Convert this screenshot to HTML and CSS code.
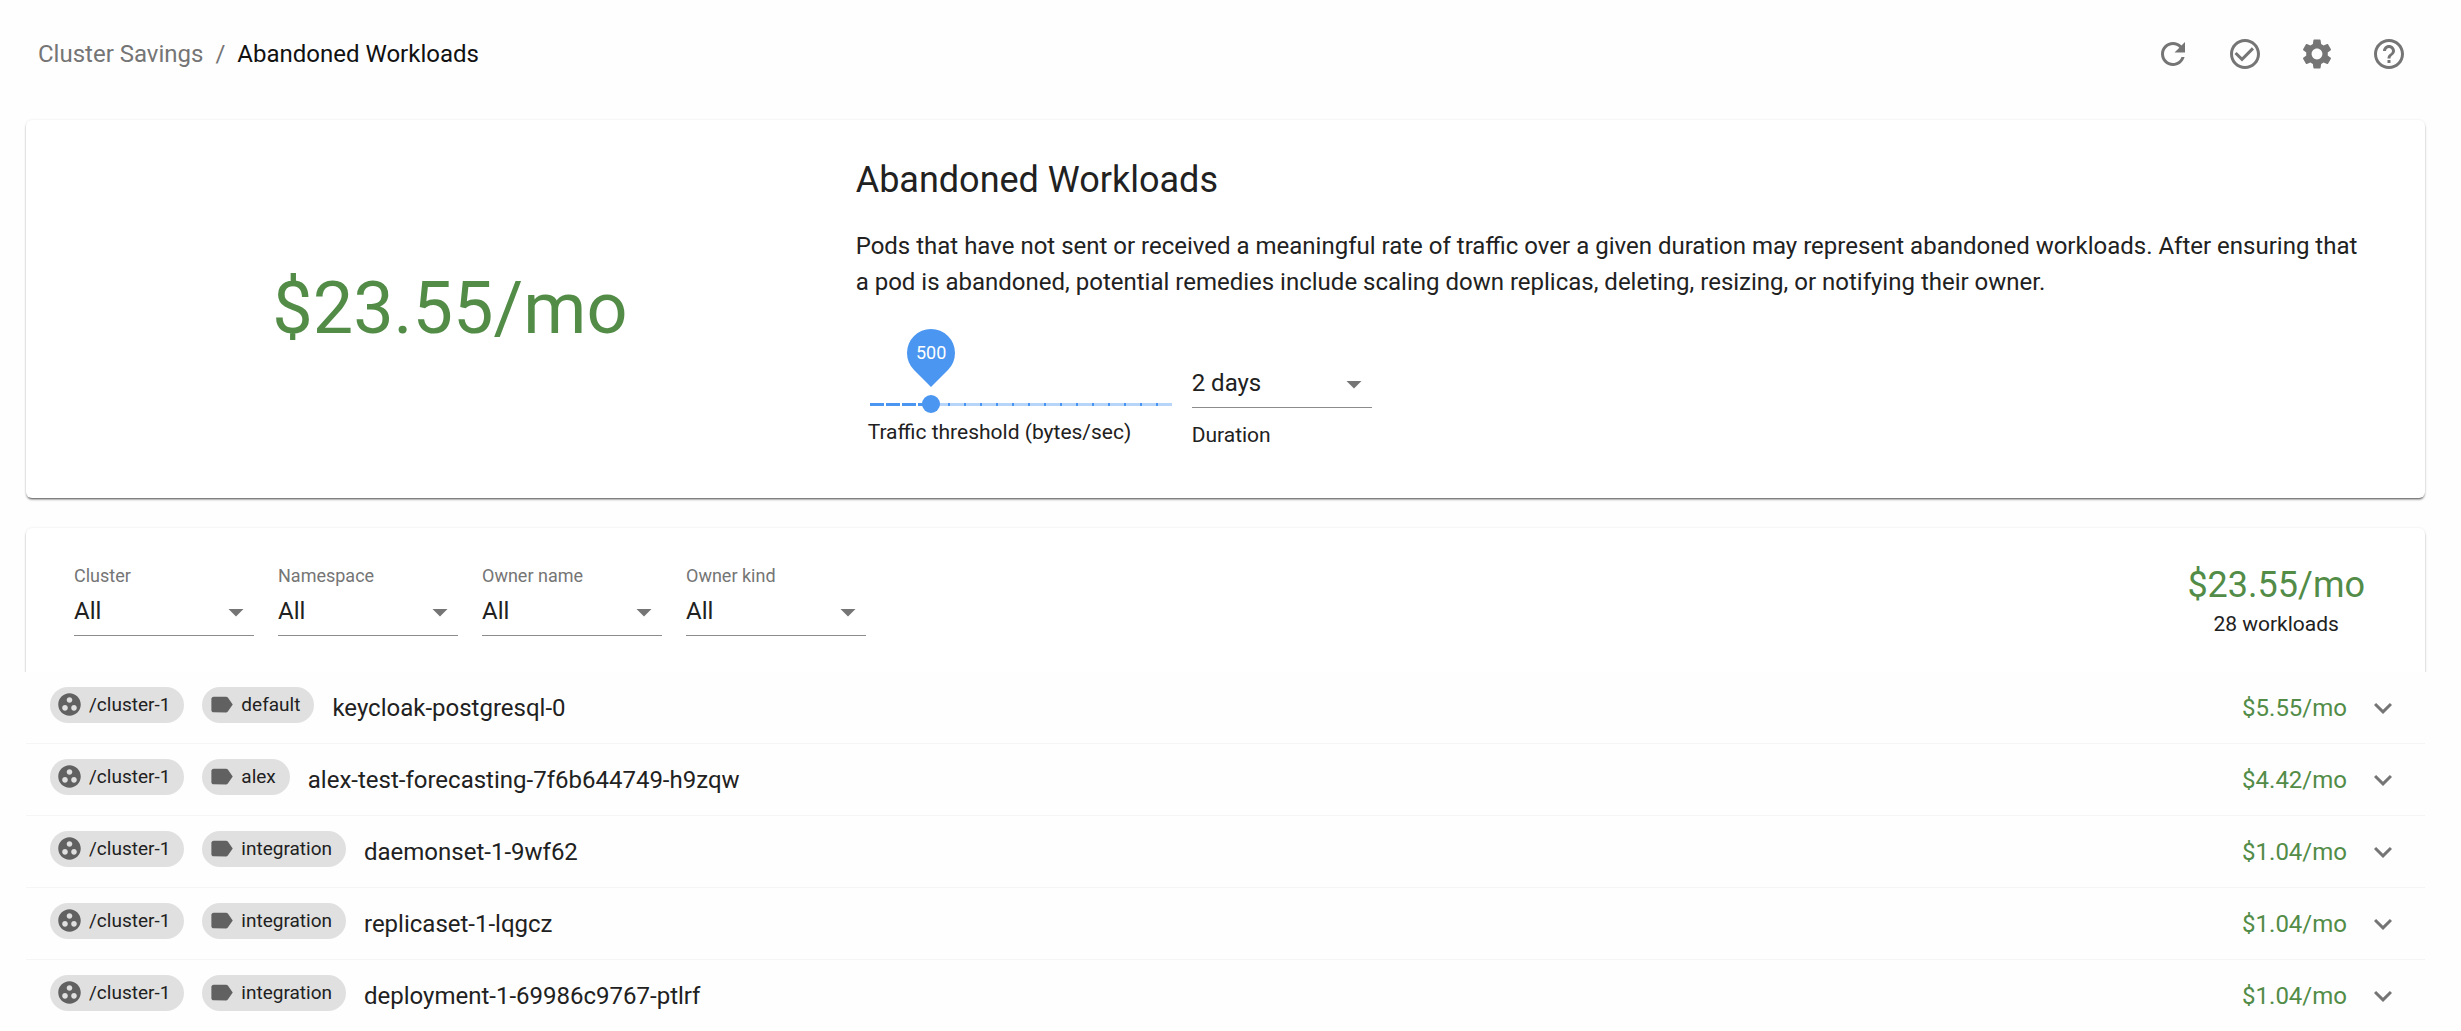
FILE: index.html
```html
<!DOCTYPE html>
<html lang="en">
<head>
<meta charset="utf-8">
<meta name="viewport" content="width=device-width, initial-scale=1">
<title>Abandoned Workloads</title>
<link rel="stylesheet" href="styles.css">
</head>
<body>
<svg class="sprite" aria-hidden="true">
  <symbol id="refresh" viewBox="0 0 24 24"><path d="M17.65 6.35C16.2 4.9 14.21 4 12 4c-4.42 0-7.99 3.58-7.99 8s3.57 8 7.99 8c3.73 0 6.84-2.55 7.73-6h-2.08c-.82 2.33-3.04 4-5.65 4-3.31 0-6-2.69-6-6s2.69-6 6-6c1.66 0 3.14.69 4.22 1.78L13 11h7V4l-2.35 2.35z"/></symbol>
  <symbol id="check" viewBox="0 0 24 24"><path d="M16.590 7.580L10 14.170l-3.590-3.580L5 12l5 5 8-8zM12 2C6.480 2 2 6.480 2 12s4.480 10 10 10 10-4.480 10-10S17.520 2 12 2zm0 18c-4.420 0-8-3.580-8-8s3.580-8 8-8 8 3.580 8 8-3.580 8-8 8z"/></symbol>
  <symbol id="gear" viewBox="0 0 24 24"><path d="M19.14 12.94c.04-.3.06-.61.06-.94 0-.32-.02-.64-.07-.94l2.030-1.580c.18-.14.23-.41.12-.61l-1.920-3.320c-.12-.22-.37-.29-.59-.22l-2.390.96c-.5-.38-1.030-.7-1.620-.94l-.36-2.540c-.04-.24-.24-.41-.48-.41h-3.840c-.24 0-.43.17-.47.41l-.36 2.540c-.59.24-1.130.57-1.620.94l-2.390-.96c-.22-.08-.47 0-.59.22L2.740 8.870c-.12.21-.08.47.12.61l2.030 1.580c-.05.3-.09.63-.09.94s.02.64.07.94l-2.030 1.580c-.18.14-.23.41-.12.61l1.920 3.320c.12.22.37.29.59.22l2.390-.96c.5.38 1.030.7 1.620.94l.36 2.540c.05.24.24.41.48.41h3.840c.24 0 .44-.17.47-.41l.36-2.540c.59-.24 1.130-.56 1.620-.94l2.390.96c.22.08.47 0 .59-.22l1.920-3.320c.12-.22.07-.47-.12-.61l-2.010-1.580zM12 15.600c-1.980 0-3.600-1.620-3.600-3.600s1.620-3.600 3.600-3.600 3.600 1.620 3.600 3.600-1.620 3.600-3.600 3.600z"/></symbol>
  <symbol id="help" viewBox="0 0 24 24"><path d="M11 18h2v-2h-2v2zm1-16C6.480 2 2 6.480 2 12s4.480 10 10 10 10-4.480 10-10S17.520 2 12 2zm0 18c-4.410 0-8-3.590-8-8s3.590-8 8-8 8 3.590 8 8-3.590 8-8 8zm0-14c-2.210 0-4 1.790-4 4h2c0-1.100.9-2 2-2s2 .9 2 2c0 2-3 1.750-3 5h2c0-2.250 3-2.500 3-5 0-2.210-1.790-4-4-4z"/></symbol>
  <symbol id="cluster" viewBox="0 0 24 24"><path d="M12 2C6.480 2 2 6.480 2 12s4.480 10 10 10 10-4.480 10-10S17.520 2 12 2zM8 17.500c-1.380 0-2.500-1.120-2.500-2.500s1.120-2.500 2.500-2.500 2.500 1.120 2.500 2.500-1.120 2.500-2.500 2.500zM9.500 8c0-1.380 1.120-2.500 2.500-2.500s2.500 1.120 2.500 2.500-1.120 2.500-2.500 2.500S9.500 9.380 9.500 8zm6.500 9.500c-1.380 0-2.500-1.120-2.500-2.500s1.120-2.500 2.500-2.500 2.500 1.120 2.500 2.500-1.120 2.500-2.500 2.500z"/></symbol>
  <symbol id="label" viewBox="0 0 24 24"><path d="M17.630 5.840C17.270 5.330 16.670 5 16 5L5 5.010C3.900 5.010 3 5.900 3 7v10c0 1.100.9 1.990 2 1.990L16 19c.67 0 1.270-.33 1.630-.84L22 12l-4.370-6.160z"/></symbol>
  <symbol id="chevron" viewBox="0 0 24 24"><path d="M16.590 8.590L12 13.170 7.410 8.590 6 10l6 6 6-6z"/></symbol>
  <symbol id="arrow" viewBox="0 0 24 24"><path d="M7 10l5 5 5-5z"/></symbol>
</svg>

<div class="page">
  <header class="topbar">
    <nav class="crumbs" aria-label="Breadcrumb">
      <a href="#savings">Cluster Savings</a>
      <span class="slash">/</span>
      <span class="current">Abandoned Workloads</span>
    </nav>
    <div class="actions">
      <button type="button" aria-label="Refresh"><svg class="icon"><use href="#refresh"/></svg></button>
      <button type="button" aria-label="Status"><svg class="icon"><use href="#check"/></svg></button>
      <button type="button" aria-label="Settings"><svg class="icon"><use href="#gear"/></svg></button>
      <button type="button" aria-label="Help"><svg class="icon"><use href="#help"/></svg></button>
    </div>
  </header>

  <main>
    <section class="card overview">
      <div class="total">$23.55/mo</div>
      <div class="about">
        <h1>Abandoned Workloads</h1>
        <p>Pods that have not sent or received a meaningful rate of traffic over a given duration may represent abandoned workloads. After ensuring that a pod is abandoned, potential remedies include scaling down replicas, deleting, resizing, or notifying their owner.</p>
        <div class="controls">
          <div class="threshold">
            <div class="slider">
              <input id="threshold" type="range" min="100" max="2000" step="100" value="500">
              <output class="bubble" for="threshold"><span>500</span></output>
            </div>
            <label for="threshold">Traffic threshold (bytes/sec)</label>
          </div>
          <div class="duration">
            <div class="select"><select id="duration"><option>2 days</option></select><svg class="icon"><use href="#arrow"/></svg></div>
            <label for="duration">Duration</label>
          </div>
        </div>
      </div>
    </section>

    <section class="card results">
      <div class="toolbar">
        <div class="filters">
          <div class="filter"><label for="f-cluster">Cluster</label><div class="select"><select id="f-cluster"><option>All</option></select><svg class="icon"><use href="#arrow"/></svg></div></div>
          <div class="filter"><label for="f-namespace">Namespace</label><div class="select"><select id="f-namespace"><option>All</option></select><svg class="icon"><use href="#arrow"/></svg></div></div>
          <div class="filter"><label for="f-owner">Owner name</label><div class="select"><select id="f-owner"><option>All</option></select><svg class="icon"><use href="#arrow"/></svg></div></div>
          <div class="filter"><label for="f-kind">Owner kind</label><div class="select"><select id="f-kind"><option>All</option></select><svg class="icon"><use href="#arrow"/></svg></div></div>
        </div>
        <div class="summary">
          <div class="amount">$23.55/mo</div>
          <div class="count">28 workloads</div>
        </div>
      </div>
      <ul class="workloads">
        <li>
          <span class="chip"><svg><use href="#cluster"/></svg>/cluster-1</span>
          <span class="chip"><svg><use href="#label"/></svg>default</span>
          <span class="name">keycloak-postgresql-0</span>
          <span class="cost">$5.55/mo</span>
          <button type="button" aria-label="Expand"><svg class="icon"><use href="#chevron"/></svg></button>
        </li>
        <li>
          <span class="chip"><svg><use href="#cluster"/></svg>/cluster-1</span>
          <span class="chip"><svg><use href="#label"/></svg>alex</span>
          <span class="name">alex-test-forecasting-7f6b644749-h9zqw</span>
          <span class="cost">$4.42/mo</span>
          <button type="button" aria-label="Expand"><svg class="icon"><use href="#chevron"/></svg></button>
        </li>
        <li>
          <span class="chip"><svg><use href="#cluster"/></svg>/cluster-1</span>
          <span class="chip"><svg><use href="#label"/></svg>integration</span>
          <span class="name">daemonset-1-9wf62</span>
          <span class="cost">$1.04/mo</span>
          <button type="button" aria-label="Expand"><svg class="icon"><use href="#chevron"/></svg></button>
        </li>
        <li>
          <span class="chip"><svg><use href="#cluster"/></svg>/cluster-1</span>
          <span class="chip"><svg><use href="#label"/></svg>integration</span>
          <span class="name">replicaset-1-lqgcz</span>
          <span class="cost">$1.04/mo</span>
          <button type="button" aria-label="Expand"><svg class="icon"><use href="#chevron"/></svg></button>
        </li>
        <li>
          <span class="chip"><svg><use href="#cluster"/></svg>/cluster-1</span>
          <span class="chip"><svg><use href="#label"/></svg>integration</span>
          <span class="name">deployment-1-69986c9767-ptlrf</span>
          <span class="cost">$1.04/mo</span>
          <button type="button" aria-label="Expand"><svg class="icon"><use href="#chevron"/></svg></button>
        </li>
      </ul>
    </section>
  </main>
</div>
</body>
</html>
```
FILE: styles.css
```css
:root {
  --ink: #212121;
  --muted: #757575;
  --green: #528c47;
  --blue: #4a96f0;
  --blue-light: #b7d5f9;
}

* { box-sizing: border-box; }

body {
  margin: 0;
  background: #fefefe;
  color: var(--ink);
  font-family: Roboto, "Liberation Sans", sans-serif;
  font-size: 24px;
  line-height: 36px;
}

.sprite { display: none; }

.icon {
  display: block;
  width: 36px;
  height: 36px;
  fill: var(--muted);
}

button {
  padding: 18px;
  border: 0;
  background: none;
  cursor: pointer;
}

.page { padding: 18px 36px 0 26px; }

.topbar {
  display: flex;
  justify-content: space-between;
  align-items: center;
  margin-bottom: 30px;
  padding-left: 12px;
}

.crumbs {
  display: flex;
  gap: 12px;
  color: var(--muted);
}

.crumbs a {
  color: inherit;
  text-decoration: none;
}

.crumbs .current { color: #111; }

.actions { display: flex; }

.card {
  border-radius: 6px;
  background: #fff;
  box-shadow: 0 3px 1px -2px rgba(0, 0, 0, .3), 0 2px 2px rgba(0, 0, 0, .3), 0 0 3px rgba(0, 0, 0, .08);
}

.overview {
  display: grid;
  grid-template-columns: 1fr 2fr;
  margin-bottom: 30px;
  padding: 36px;
}

.total {
  align-self: center;
  color: var(--green);
  font-size: 72px;
  line-height: 84px;
  text-align: center;
}

.about { padding: 0 18px; }

h1 {
  margin: 0 0 24px;
  font-size: 36px;
  font-weight: 400;
  line-height: 48px;
}

p { margin: 0; }

.controls {
  display: flex;
  align-items: flex-start;
  gap: 20px;
  padding: 60px 12px 12px;
  font-size: 21px;
  line-height: 30px;
}

.controls label { display: block; }

.threshold { width: 304px; }

.slider {
  position: relative;
  height: 57px;
  padding-top: 34px;
}

.slider input {
  display: block;
  width: 320px;
  height: 20px;
  margin: 0 -9px;
  appearance: none;
  background:
    repeating-linear-gradient(90deg, #fff 0 2px, transparent 2px 16px) 9px 9px / 54px 3px no-repeat,
    linear-gradient(var(--blue), var(--blue)) 9px 9px / 64px 3px no-repeat,
    repeating-linear-gradient(90deg, var(--blue) 0 2px, var(--blue-light) 2px 16px) 9px 9px / 304px 3px no-repeat;
}

.slider input::-webkit-slider-thumb {
  width: 18px;
  height: 18px;
  border: 0;
  border-radius: 50%;
  appearance: none;
  background: var(--blue);
}

.bubble {
  position: absolute;
  bottom: 40px;
  left: 39px;
  display: grid;
  place-items: center;
  width: 48px;
  height: 48px;
  border-radius: 50% 50% 50% 0;
  background: var(--blue);
  color: #fff;
  font-size: 18px;
  transform: rotate(-45deg);
}

.bubble span { transform: rotate(45deg); }

.select {
  position: relative;
  width: 180px;
}

.select select {
  display: block;
  width: 100%;
  height: 48px;
  padding: 0 36px 2px 0;
  border: 0;
  border-bottom: 1px solid #8c8c8c;
  appearance: none;
  background: none;
  color: var(--ink);
  font: inherit;
  font-size: 24px;
}

.select .icon {
  position: absolute;
  top: 6px;
  right: 0;
  pointer-events: none;
}

.duration label { margin-top: 12px; }

.toolbar {
  display: flex;
  justify-content: space-between;
  align-items: flex-start;
  padding: 36px 60px 30px 48px;
}

.filters {
  display: flex;
  gap: 24px;
}

.filter label {
  display: block;
  color: var(--muted);
  font-size: 18px;
  line-height: 24px;
}

.summary { text-align: center; }

.amount {
  color: var(--green);
  font-size: 36px;
  line-height: 42px;
}

.count { font-size: 21px; }

.workloads {
  position: relative;
  margin: 0 -3px;
  padding: 0 3px;
  background: #fefefe;
  list-style: none;
}

.workloads li {
  display: flex;
  align-items: center;
  height: 72px;
  padding: 0 6px 0 24px;
  border-bottom: 1px solid #f5f5f5;
}

.chip {
  display: flex;
  align-items: center;
  height: 36px;
  margin: 0 18px 6px 0;
  padding: 0 14px 0 6px;
  border-radius: 18px;
  background: #e0e0e0;
  font-size: 19px;
}

.chip svg {
  width: 27px;
  height: 27px;
  margin-right: 6px;
  fill: #616161;
}

.cost {
  margin-left: auto;
  color: var(--green);
}
```
